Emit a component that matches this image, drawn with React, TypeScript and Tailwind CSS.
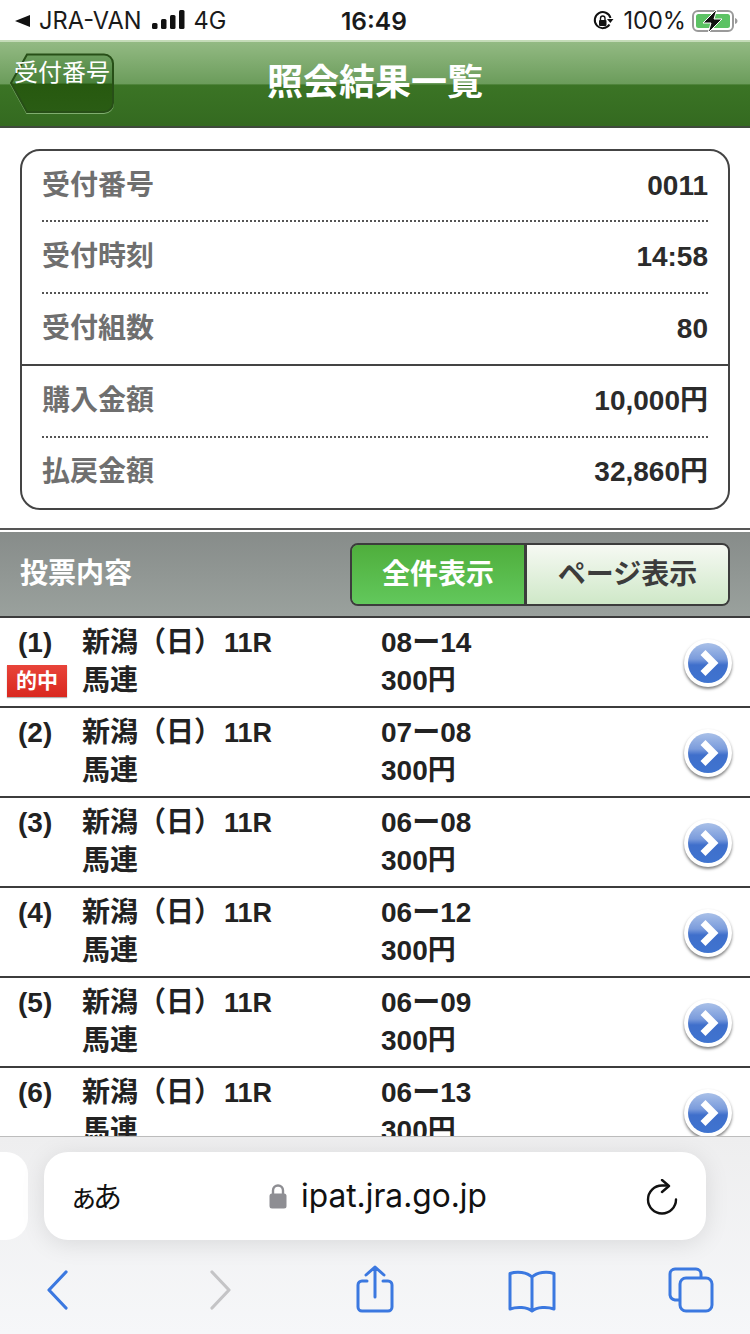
const jp = "font-['Liberation_Sans','Noto_Sans_CJK_JP',sans-serif]"

const summary = [
  { label: '受付番号', value: '0011', line: 'dot', h: 'h-[71px]' },
  { label: '受付時刻', value: '14:58', line: 'dot', h: 'h-[72px]' },
  { label: '受付組数', value: '80', line: 'solid', h: 'h-[72px]' },
  { label: '購入金額', value: '10,000円', line: 'dot', h: 'h-[72px]' },
  { label: '払戻金額', value: '32,860円', line: '', h: 'h-[68px]' },
]

const bets = [
  { no: '(1)', combo: '08ー14', hit: true },
  { no: '(2)', combo: '07ー08' },
  { no: '(3)', combo: '06ー08' },
  { no: '(4)', combo: '06ー12' },
  { no: '(5)', combo: '06ー09' },
  { no: '(6)', combo: '06ー13' },
]

function StatusBar() {
  return (
    <div className="h-10 shrink-0 bg-white flex items-center pt-[2px] pl-[14px] pr-[12px] text-[23.600px] text-[#1a1a1a] font-['Inter',sans-serif] relative">
      <svg width="17" height="14" viewBox="0 0 17 14" className="mr-2">
        <path d="M1 7 16 1v12z" fill="#111" />
      </svg>
      <span>JRA-VAN</span>
      <svg width="34" height="20" viewBox="0 0 34 20" className="ml-[10px] mr-[8px] -mt-[2px]">
        <rect x="0" y="13" width="5.5" height="6" rx="1.5" fill="#111" />
        <rect x="9" y="9" width="5.5" height="10" rx="1.5" fill="#111" />
        <rect x="18" y="5" width="5.5" height="14" rx="1.5" fill="#111" />
        <rect x="27" y="0" width="5.5" height="19" rx="1.5" fill="#111" />
      </svg>
      <span>4G</span>
      <span className="absolute left-[341px] font-semibold text-[24.500px]">16:49</span>
      <div className="ml-auto flex items-center">
        <svg width="22" height="22" viewBox="0 0 22 22" className="mr-[9px]">
          <path d="M17.5 14.5A8 8 0 1 1 18.5 8" fill="none" stroke="#111" strokeWidth="2" />
          <path d="M15 9h6.5l-3.2 4z" fill="#111" />
          <rect x="7" y="10" width="7.5" height="6" rx="1" fill="#111" />
          <path d="M8.5 10V8.300a2.200 2.200 0 0 1 4.500 0V10" fill="none" stroke="#111" strokeWidth="1.400" />
        </svg>
        <span>100%</span>
        <svg width="46" height="24" viewBox="0 0 46 24" className="ml-[6px]">
          <rect x="1" y="2" width="40" height="20" rx="5" fill="none" stroke="#9a9a9a" strokeWidth="2" />
          <rect x="4" y="5" width="34" height="14" rx="2.500" fill="#5cc264" />
          <path d="M43 9v6c1.500-.5 2.500-1.500 2.500-3s-1-2.500-2.500-3z" fill="#9a9a9a" />
          <path d="M25 0 11 14h8l-3 10 14-14h-8z" fill="#111" stroke="#fff" strokeWidth="1" />
        </svg>
      </div>
    </div>
  )
}

function Header() {
  return (
    <div className="h-[88px] shrink-0 relative flex items-center justify-center border-t-2 border-b-2 border-t-[#c5dcb8] border-b-[#3f4a3c] bg-[linear-gradient(#93ba83_0%,#6b9c5b_50%,#3b7425_51%,#346a20_100%)]">
      <svg width="106" height="62" viewBox="0 0 106 62" className="absolute left-[9px] top-[11px]">
        <defs>
          <linearGradient id="bk" x1="0" x2="0" y1="0" y2="1">
            <stop offset="0" stopColor="#6c9e5e" />
            <stop offset="0.5" stopColor="#48803a" />
            <stop offset="0.51" stopColor="#27590f" />
            <stop offset="1" stopColor="#2a5c14" />
          </linearGradient>
        </defs>
        <path d="M18 2.500H95a9 9 0 0 1 9 9V50a9 9 0 0 1-9 9H18L2 30z" fill="none" stroke="#7fae6e" strokeWidth="2" transform="translate(0 1)" />
        <path d="M18 1.500H95a9 9 0 0 1 9 9V50a9 9 0 0 1-9 9H18L2 30z" fill="url(#bk)" stroke="#274f17" strokeWidth="2" />
      </svg>
      <span className={`absolute left-[14px] top-[16px] text-[24px] leading-[30px] text-white ${jp}`}>受付番号</span>
      <h1 className={`text-[36px] leading-none font-bold text-white -mt-[2px] ${jp}`}>照会結果一覧</h1>
    </div>
  )
}

function Arrow() {
  return (
    <div className="w-[48px] h-[48px] rounded-full bg-white shadow-[0_2px_3px_rgba(0,0,0,0.5)] flex items-center justify-center">
      <div className="w-[40px] h-[40px] rounded-full bg-[linear-gradient(#a9c0e8_0%,#7b9cdc_40%,#3f6fcb_55%,#3f74d0_100%)] flex items-center justify-center">
        <svg width="24" height="30" viewBox="0 0 24 30">
          <path d="M7 4.500 17.500 15 7 25.500" fill="none" stroke="#fff" strokeWidth="7" />
        </svg>
      </div>
    </div>
  )
}

function BetRow({ no, combo, hit }: { no: string; combo: string; hit?: boolean }) {
  return (
    <div className={`h-[90px] shrink-0 relative flex border-b-2 border-[#3c3c3c] text-[#222] font-bold text-[28px] leading-[38px] ${jp}`}>
      <div className="w-[82px] shrink-0 pt-[6px] pl-[18px]">
        <div>{no}</div>
        {hit && (
          <div className="absolute left-[7px] top-[47px] w-[60px] h-[32px] bg-[linear-gradient(#e8443a,#d9281f)] text-white text-[21px] leading-[32px] text-center shadow-[0_1px_1px_rgba(0,0,0,0.3)]">
            的中
          </div>
        )}
      </div>
      <div className="w-[299px] shrink-0 pt-[6px]">
        <div>
          新潟（日）<span className="ml-[2px] text-[27px]">11R</span>
        </div>
        <div>馬連</div>
      </div>
      <div className="pt-[6px]">
        <div>{combo}</div>
        <div>300円</div>
      </div>
      <div className="absolute right-[18px] top-[21px]">
        <Arrow />
      </div>
    </div>
  )
}

export default function App() {
  return (
    <div className="w-[750px] h-[1334px] overflow-hidden bg-white flex flex-col">
      <StatusBar />
      <Header />

      {/* summary card */}
      <div className="mx-[20px] mt-[21px] h-[361px] shrink-0 rounded-[20px] border-2 border-[#444] px-[20px] flex flex-col">
        {summary.map((s) => (
          <div
            key={s.label}
            className={`${s.h} shrink-0 flex items-center justify-between font-bold text-[28px] ${jp} ${
              s.line === 'dot' ? 'border-b-2 border-dotted border-[#555]' : ''
            } ${s.line === 'solid' ? 'border-b-2 border-[#444] -mx-[20px] px-[20px]' : ''}`}
          >
            <span className="text-[#6f6f6f]">{s.label}</span>
            <span className="text-[#2b2b2b]">{s.value}</span>
          </div>
        ))}
      </div>

      {/* section header */}
      <div className="mt-[18px] h-[90px] shrink-0 border-t-2 border-[#555] pt-[2px] bg-white">
        <div className="h-[86px] border-b-2 border-[#3c3c3c] bg-[linear-gradient(#878c8a,#9aa19d)] flex items-center pl-[20px] pr-[20px]">
          <span className={`text-white font-bold text-[28px] ${jp}`}>投票内容</span>
          <div className={`ml-auto flex h-[63px] w-[380px] rounded-[8px] border-2 border-[#3c3c3c] overflow-hidden font-bold text-[28px] ${jp}`}>
            <div className="w-[172px] shrink-0 pt-[2px] bg-[linear-gradient(#4fae3c,#62c85c)] text-white flex items-center justify-center border-r-[3px] border-[#3c3c3c] box-content">
              全件表示
            </div>
            <div className="flex-1 pt-[2px] bg-[linear-gradient(#f6f9f3,#cfe8c8)] text-[#3c3c3c] flex items-center justify-center">
              ページ表示
            </div>
          </div>
        </div>
      </div>

      {/* bet list */}
      <div className="flex-1 min-h-0 overflow-hidden flex flex-col">
        {bets.map((b) => (
          <BetRow key={b.no} no={b.no} combo={b.combo} hit={b.hit} />
        ))}
      </div>

      {/* safari toolbar */}
      <div className="h-[198px] shrink-0 border-t border-[#bdbdbd] bg-[linear-gradient(#eeeeef,#f6f7f9)] relative">
        <div className="absolute left-0 top-[15px] w-[28px] h-[88px] rounded-r-[22px] bg-white" />
        <div className="absolute left-[44px] top-[15px] w-[662px] h-[88px] rounded-[24px] bg-white shadow-[0_4px_24px_rgba(0,0,0,0.1)] flex items-center justify-center font-['Inter',sans-serif]">
          <span className="absolute left-[25px] text-[29px] tracking-[-5px] text-[#111] font-['Noto_Sans_CJK_JP',sans-serif]">
            ぁあ
          </span>
          <svg width="18" height="26" viewBox="0 0 18 26" className="ml-[6px] mr-[14px]" fill="#8e8e93">
            <path d="M4 12V7.500a5 5 0 0 1 10 0V12" fill="none" stroke="#8e8e93" strokeWidth="2.400" />
            <rect x="0.500" y="10.500" width="17" height="15" rx="2.500" />
          </svg>
          <span className="text-[31.700px] text-[#111]">ipat.jra.go.jp</span>
          <svg width="34" height="36" viewBox="0 0 34 36" className="absolute right-[27px] top-[27px]" fill="none" stroke="#111" strokeWidth="2.400">
            <path d="M31 20.500a14 14 0 1 1-14-14h5" strokeLinecap="round" />
            <path d="M17 1l7 6-7 6" strokeLinecap="round" strokeLinejoin="round" />
          </svg>
        </div>
        <div className="absolute left-0 right-0 top-[126px] text-[#3b78e0]">
          <svg width="24" height="40" viewBox="0 0 24 40" className="absolute left-[46px] top-[7px]" fill="none" stroke="currentColor" strokeWidth="3.200" strokeLinecap="round" strokeLinejoin="round">
            <path d="M20 2 3 20l17 18" />
          </svg>
          <svg width="24" height="40" viewBox="0 0 24 40" className="absolute left-[209px] top-[7px] text-[#c4c4c6]" fill="none" stroke="currentColor" strokeWidth="3.200" strokeLinecap="round" strokeLinejoin="round">
            <path d="M3 2l17 18L3 38" />
          </svg>
          <svg width="40" height="50" viewBox="0 0 40 50" className="absolute left-[355px] top-[2px]" fill="none" stroke="currentColor" strokeWidth="3" strokeLinecap="round" strokeLinejoin="round">
            <path d="M12 16H7a4 4 0 0 0-4 4v22a4 4 0 0 0 4 4h26a4 4 0 0 0 4-4V20a4 4 0 0 0-4-4h-5" />
            <path d="M20 32V2M11 10l9-8 9 8" />
          </svg>
          <svg width="50" height="44" viewBox="0 0 50 44" className="absolute left-[507px] top-[6px]" fill="none" stroke="currentColor" strokeWidth="3" strokeLinejoin="round">
            <path d="M25 8C20 3 10 2 3 4.500V40c7-2.500 17-2 22 2 5-4 15-4.500 22-2V4.500C40 2 30 3 25 8zM25 8v34" />
          </svg>
          <svg width="48" height="48" viewBox="0 0 48 48" className="absolute left-[667px] top-[4px]" fill="none" stroke="currentColor" strokeWidth="3">
            <path d="M12 33H8a6 6 0 0 1-5-5V7a5 5 0 0 1 5-5h21a5 5 0 0 1 5 5v3" />
            <rect x="13" y="11" width="32" height="33" rx="6" />
          </svg>
        </div>
      </div>
    </div>
  )
}
